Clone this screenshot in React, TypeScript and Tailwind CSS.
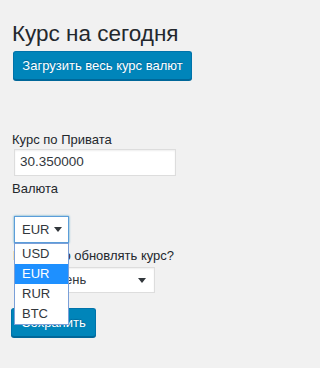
import React from 'react';

const font = { fontFamily: '"Liberation Sans", Arial, sans-serif' };

function Arrow() {
  return (
    <svg width="8" height="5" viewBox="0 0 8 5" className="shrink-0">
      <path d="M0 0 L8 0 L4 5 Z" fill="#32373c" />
    </svg>
  );
}

function App() {
  const options = ['USD', 'EUR', 'RUR', 'BTC'];

  return (
    <div className="min-h-[368px] w-full bg-[#f1f1f1] text-[#23282d] pl-[12px] pt-[19px]" style={font}>
      <h1 className="text-[22.5px] leading-[30px] font-normal">Курс на сегодня</h1>
      <button className="mt-[2px] ml-px h-[29px] w-[179px] rounded-[3px] bg-[#0085ba] border border-[#0073aa] border-b-[#006799] shadow-[0_1px_0_#006799] text-white text-[13px] leading-none [text-shadow:0_-1px_1px_#006799]">
        Загрузить весь курс валют
      </button>

      <div className="mt-[51px] text-[13px] leading-[18px]">Курс по Привата</div>
      <div className="ml-[2px] w-[162px] h-[27px] bg-white border border-[#ddd] shadow-[inset_0_1px_2px_rgba(0,0,0,0.07)] flex items-center pl-[5px] text-[13.5px] text-[#32373c]">
        30.350000
      </div>
      <div className="mt-[4px] text-[13px] leading-[18px]">Валюта</div>

      <div className="relative mt-[18px] ml-[2px] w-[55px]">
        <div className="h-[27px] bg-white border border-[#5b9dd9] shadow-[0_0_2px_rgba(30,140,190,0.8)] flex items-center justify-between pl-[7px] pr-[6px] text-[13px] text-[#32373c]">
          <span>EUR</span>
          <Arrow />
        </div>
        <ul className="absolute left-0 top-[27px] w-[55px] bg-white border border-[#7a9fd8] z-10 text-[13px] text-[#32373c]">
          {options.map((o) => (
            <li
              key={o}
              className={
                o === 'EUR'
                  ? 'h-[20px] pl-[7px] leading-[20px] bg-[#1e90ff] text-white'
                  : 'h-[20px] pl-[7px] leading-[20px]'
              }
            >
              {o}
            </li>
          ))}
        </ul>
      </div>

      <div className="mt-[4px] pl-px text-[13px] leading-[18px]">Как часто обновлять курс?</div>
      <div className="mt-[2px] ml-[2px] w-[141px] h-[26px] bg-white border border-[#ddd] shadow-[inset_0_1px_2px_rgba(0,0,0,0.07)] flex items-center justify-between pl-[7px] pr-[8px] text-[13px] text-[#32373c]">
        <span>Раз в день</span>
        <Arrow />
      </div>

      <button className="mt-[15px] -ml-px h-[29px] w-[85px] rounded-[3px] bg-[#0085ba] border border-[#0073aa] border-b-[#006799] shadow-[0_1px_0_#006799] text-white text-[13px] leading-none [text-shadow:0_-1px_1px_#006799]">
        Сохранить
      </button>
    </div>
  );
}

export default App;
